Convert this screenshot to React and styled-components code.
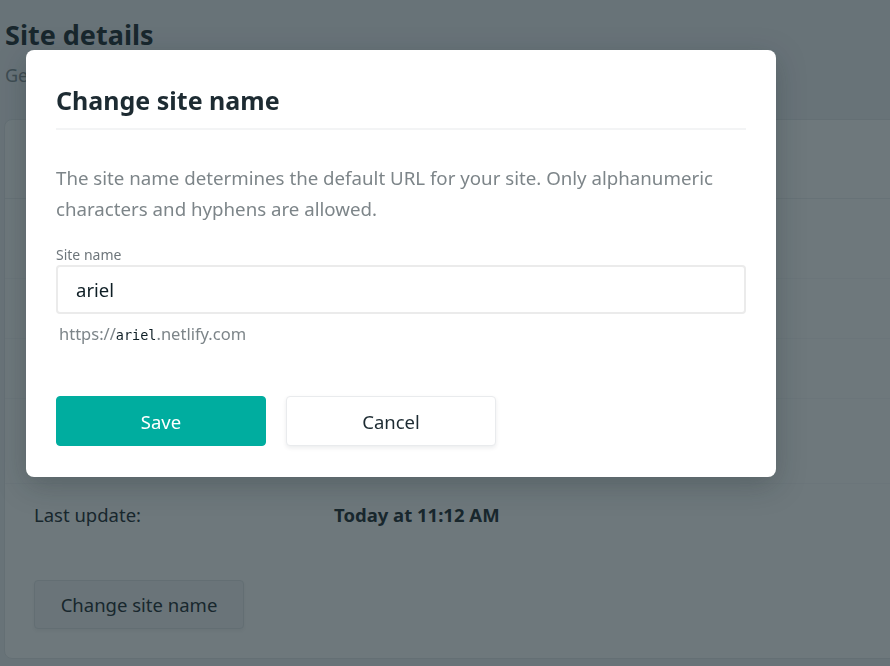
import React from "react";
import styled, { createGlobalStyle } from "styled-components";

const GlobalStyle = createGlobalStyle`
  html, body {
    margin: 0;
    padding: 0;
    background: #f1f3f6;
    font-family: "Noto Sans", "Open Sans", sans-serif;
    color: #3a4349;
  }
  * { box-sizing: border-box; }
`;

const Page = styled.div`
  width: 890px;
  height: 666px;
  overflow: hidden;
  padding: 15px 0 0 4px;
`;

const Title = styled.h1`
  margin: 0 0 0 1px;
  font-size: 27px;
  font-weight: 700;
  line-height: 40px;
  color: #2b353b;
`;

const Subtitle = styled.p`
  margin: 7px 0 0 1px;
  font-size: 18px;
  line-height: 26px;
  color: #8a9298;
`;

const Card = styled.div`
  margin-top: 31px;
  width: 1000px;
  height: 540px;
  background: #fff;
  border: 1px solid #e6e9ec;
  border-radius: 8px;
  display: flex;
  flex-direction: column;
`;

const CardHeader = styled.div`
  flex: none;
  height: 79px;
  border-bottom: 1px solid #eef0f2;
  padding: 24px 30px;
  font-size: 20px;
  font-weight: 700;
  color: #2b353b;
`;

const Row = styled.div`
  flex: none;
  display: flex;
  align-items: center;
  height: ${(p) => p.h || 60}px;
  padding: 0 29px;
  font-size: 18.5px;
  color: #2b353b;
  border-bottom: ${(p) => (p.last ? "none" : "1px solid #f7f8f9")};
`;

const RowLabel = styled.span`
  width: 300px;
`;

const RowValue = styled.span`
  font-weight: 700;
`;

const Actions = styled.div`
  padding: 36px 29px 0;
`;

const GhostButton = styled.button`
  width: 210px;
  height: 49px;
  font-family: inherit;
  font-size: 18.5px;
  color: #2b353b;
  background: #f4f6f8;
  border: 1px solid #e3e6e9;
  border-radius: 4px;
  box-shadow: 0 2px 4px rgba(0, 0, 0, 0.06);
`;

const Overlay = styled.div`
  position: fixed;
  inset: 0;
  background: rgba(14, 30, 37, 0.6);
  display: flex;
  align-items: flex-start;
  padding: 50px 0 0 26px;
`;

const Modal = styled.div`
  width: 750px;
  height: 427px;
  background: #fff;
  border-radius: 8px;
  box-shadow: 0 8px 30px rgba(14, 30, 37, 0.25);
  padding: 30px 30px 0;
`;

const ModalTitle = styled.h2`
  margin: 0;
  font-size: 25px;
  font-weight: 700;
  line-height: 40px;
  color: #1d2b32;
  padding-bottom: 8px;
  border-bottom: 2px solid #f3f4f5;
`;

const Description = styled.p`
  margin: 32px 0 0;
  font-size: 18.7px;
  line-height: 31px;
  color: #7d8589;
`;

const Label = styled.label`
  display: block;
  margin-top: 21px;
  font-size: 14px;
  line-height: 20px;
  color: #6e767b;
`;

const Input = styled.input`
  display: block;
  width: 100%;
  height: 49px;
  margin-top: 0;
  padding: 0 18px;
  font-family: inherit;
  font-size: 18.5px;
  color: #0e1e25;
  border: 2px solid #ebebeb;
  border-radius: 4px;
  outline: none;
`;

const Hint = styled.p`
  margin: 8px 0 0 3px;
  font-size: 16.5px;
  line-height: 24px;
  color: #7d8589;
`;

const Code = styled.code`
  font-family: "DejaVu Sans Mono", monospace;
  font-size: 13.5px;
  color: #0e1e25;
`;

const ButtonRow = styled.div`
  display: flex;
  gap: 20px;
  margin-top: 49px;
`;

const Button = styled.button`
  width: 210px;
  height: 50px;
  font-family: inherit;
  font-size: 18.5px;
  border-radius: 4px;
  cursor: pointer;
  color: ${(p) => (p.primary ? "#fff" : "#1d2b32")};
  background: ${(p) => (p.primary ? "#00ad9f" : "#fff")};
  border: 1px solid ${(p) => (p.primary ? "#00ad9f" : "#e9ebed")};
  box-shadow: ${(p) => (p.primary ? "none" : "0 2px 4px rgba(14, 30, 37, 0.08)")};
`;

const App = () => {
  return (
    <>
      <GlobalStyle />
      <Page>
        <Title>Site details</Title>
        <Subtitle>General information about your site</Subtitle>
        <Card>
          <CardHeader>Site information</CardHeader>
          <Row h={80}>
            <RowLabel>Site name:</RowLabel>
            <RowValue>ariel</RowValue>
          </Row>
          <Row>
            <RowLabel>Owner:</RowLabel>
            <RowValue>Ariel</RowValue>
          </Row>
          <Row>
            <RowLabel>Created:</RowLabel>
            <RowValue>Today at 11:12 AM</RowValue>
          </Row>
          <Row h={85}>
            <RowLabel>Repository:</RowLabel>
            <RowValue>Manual deploys</RowValue>
          </Row>
          <Row last>
            <RowLabel>Last update:</RowLabel>
            <RowValue>Today at 11:12 AM</RowValue>
          </Row>
          <Actions>
            <GhostButton>Change site name</GhostButton>
          </Actions>
        </Card>
      </Page>
      <Overlay>
        <Modal>
          <ModalTitle>Change site name</ModalTitle>
          <Description>
            The site name determines the default URL for your site. Only alphanumeric
            characters and hyphens are allowed.
          </Description>
          <Label htmlFor="site-name">Site name</Label>
          <Input id="site-name" defaultValue="ariel" />
          <Hint>
            https://<Code>ariel</Code>.netlify.com
          </Hint>
          <ButtonRow>
            <Button primary>Save</Button>
            <Button>Cancel</Button>
          </ButtonRow>
        </Modal>
      </Overlay>
    </>
  );
};

export default App;
